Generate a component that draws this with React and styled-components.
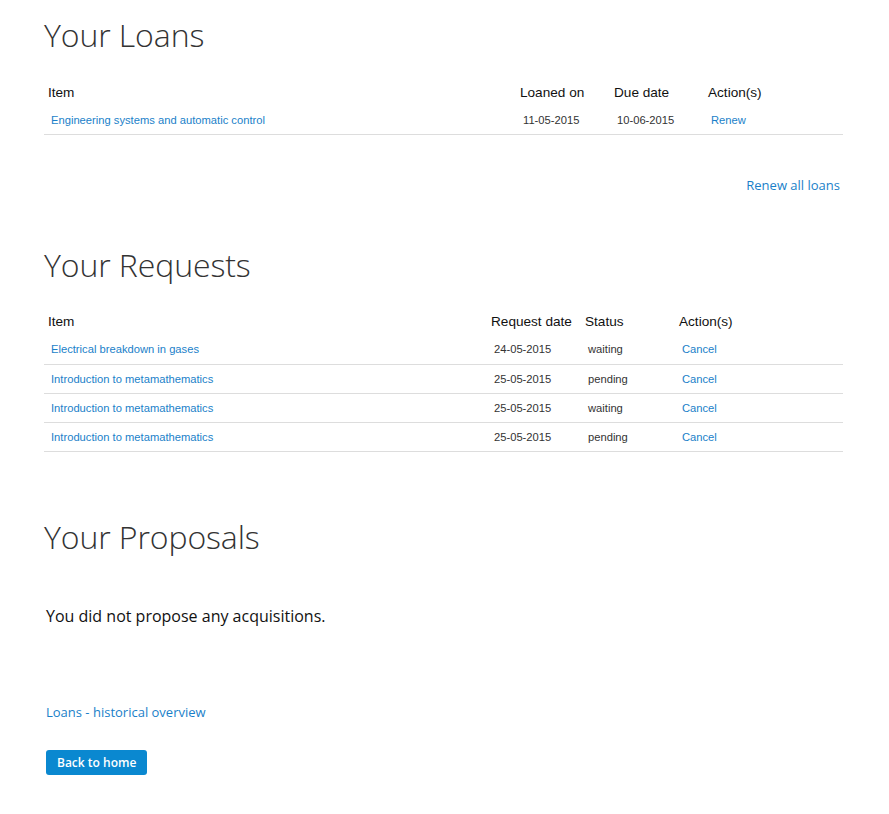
import React from 'react';
import styled, { createGlobalStyle } from 'styled-components';

const GlobalStyle = createGlobalStyle`
  body {
    margin: 0;
    background: #fff;
    font-family: 'Open Sans', 'Liberation Sans', Arial, sans-serif;
    color: #222;
  }
`;

const Page = styled.div`
  width: 799px;
  padding: 16px 0 40px 44px;
`;

const Section = styled.section`
  margin-top: ${(p) => p.top || 0}px;
`;

const Heading = styled.h2`
  margin: 0;
  font-family: 'Open Sans', sans-serif;
  font-weight: 300;
  font-size: 32px;
  line-height: 38px;
  color: #333;
  letter-spacing: -0.1px;
`;

const Table = styled.table`
  width: 100%;
  border-collapse: collapse;
  margin-top: ${(p) => p.top || 24}px;
  font-family: 'Liberation Sans', Arial, sans-serif;
`;

const Th = styled.th`
  text-align: left;
  font-weight: 400;
  font-size: 13.6px;
  color: #111;
  height: 27px;
  padding: 0 4px;
  width: ${(p) => (p.w ? `${p.w}px` : 'auto')};
`;

const Td = styled.td`
  font-size: 11.2px;
  color: #333;
  height: 28.3px;
  padding: 0 7px;
  border-bottom: 1px solid #ddd;
`;

const Link = styled.a`
  color: #1a7fc9;
  text-decoration: none;
  cursor: pointer;
`;

const RightLink = styled.div`
  text-align: right;
  padding: 31px 3px 0 0;
  font-size: 13px;
  line-height: 38px;
`;

const Message = styled.p`
  margin: 49px 0 0 2px;
  font-size: 16px;
  line-height: 22px;
  color: #111;
`;

const FooterLink = styled.div`
  margin: 75px 0 0 2px;
  font-size: 13px;
  line-height: 20px;
`;

const Button = styled.button`
  margin: 28px 0 0 2px;
  display: block;
  height: 25px;
  padding: 0 11px;
  border: none;
  border-radius: 3px;
  background: #0a88d0;
  color: #fff;
  font-family: 'Open Sans', sans-serif;
  font-weight: 600;
  font-size: 12px;
  cursor: pointer;
`;

const loans = [
  { item: 'Engineering systems and automatic control', on: '11-05-2015', due: '10-06-2015' },
];

const requests = [
  { item: 'Electrical breakdown in gases', date: '24-05-2015', status: 'waiting' },
  { item: 'Introduction to metamathematics', date: '25-05-2015', status: 'pending' },
  { item: 'Introduction to metamathematics', date: '25-05-2015', status: 'waiting' },
  { item: 'Introduction to metamathematics', date: '25-05-2015', status: 'pending' },
];

export default function App() {
  return (
    <>
      <GlobalStyle />
      <Page>
        <Section>
          <Heading>Your Loans</Heading>
          <Table top={25}>
            <thead>
              <tr>
                <Th>Item</Th>
                <Th w={86}>Loaned on</Th>
                <Th w={86}>Due date</Th>
                <Th w={131}>Action(s)</Th>
              </tr>
            </thead>
            <tbody>
              {loans.map((l, i) => (
                <tr key={i}>
                  <Td><Link>{l.item}</Link></Td>
                  <Td>{l.on}</Td>
                  <Td>{l.due}</Td>
                  <Td><Link>Renew</Link></Td>
                </tr>
              ))}
            </tbody>
          </Table>
          <RightLink><Link href="#">Renew all loans</Link></RightLink>
        </Section>

        <Section top={42}>
          <Heading>Your Requests</Heading>
          <Table>
            <thead>
              <tr>
                <Th>Item</Th>
                <Th w={86}>Request date</Th>
                <Th w={86}>Status</Th>
                <Th w={160}>Action(s)</Th>
              </tr>
            </thead>
            <tbody>
              {requests.map((r, i) => (
                <tr key={i}>
                  <Td><Link>{r.item}</Link></Td>
                  <Td>{r.date}</Td>
                  <Td>{r.status}</Td>
                  <Td><Link>Cancel</Link></Td>
                </tr>
              ))}
            </tbody>
          </Table>
        </Section>

        <Section top={66}>
          <Heading>Your Proposals</Heading>
          <Message>You did not propose any acquisitions.</Message>
          <FooterLink><Link href="#">Loans - historical overview</Link></FooterLink>
          <Button>Back to home</Button>
        </Section>
      </Page>
    </>
  );
}
